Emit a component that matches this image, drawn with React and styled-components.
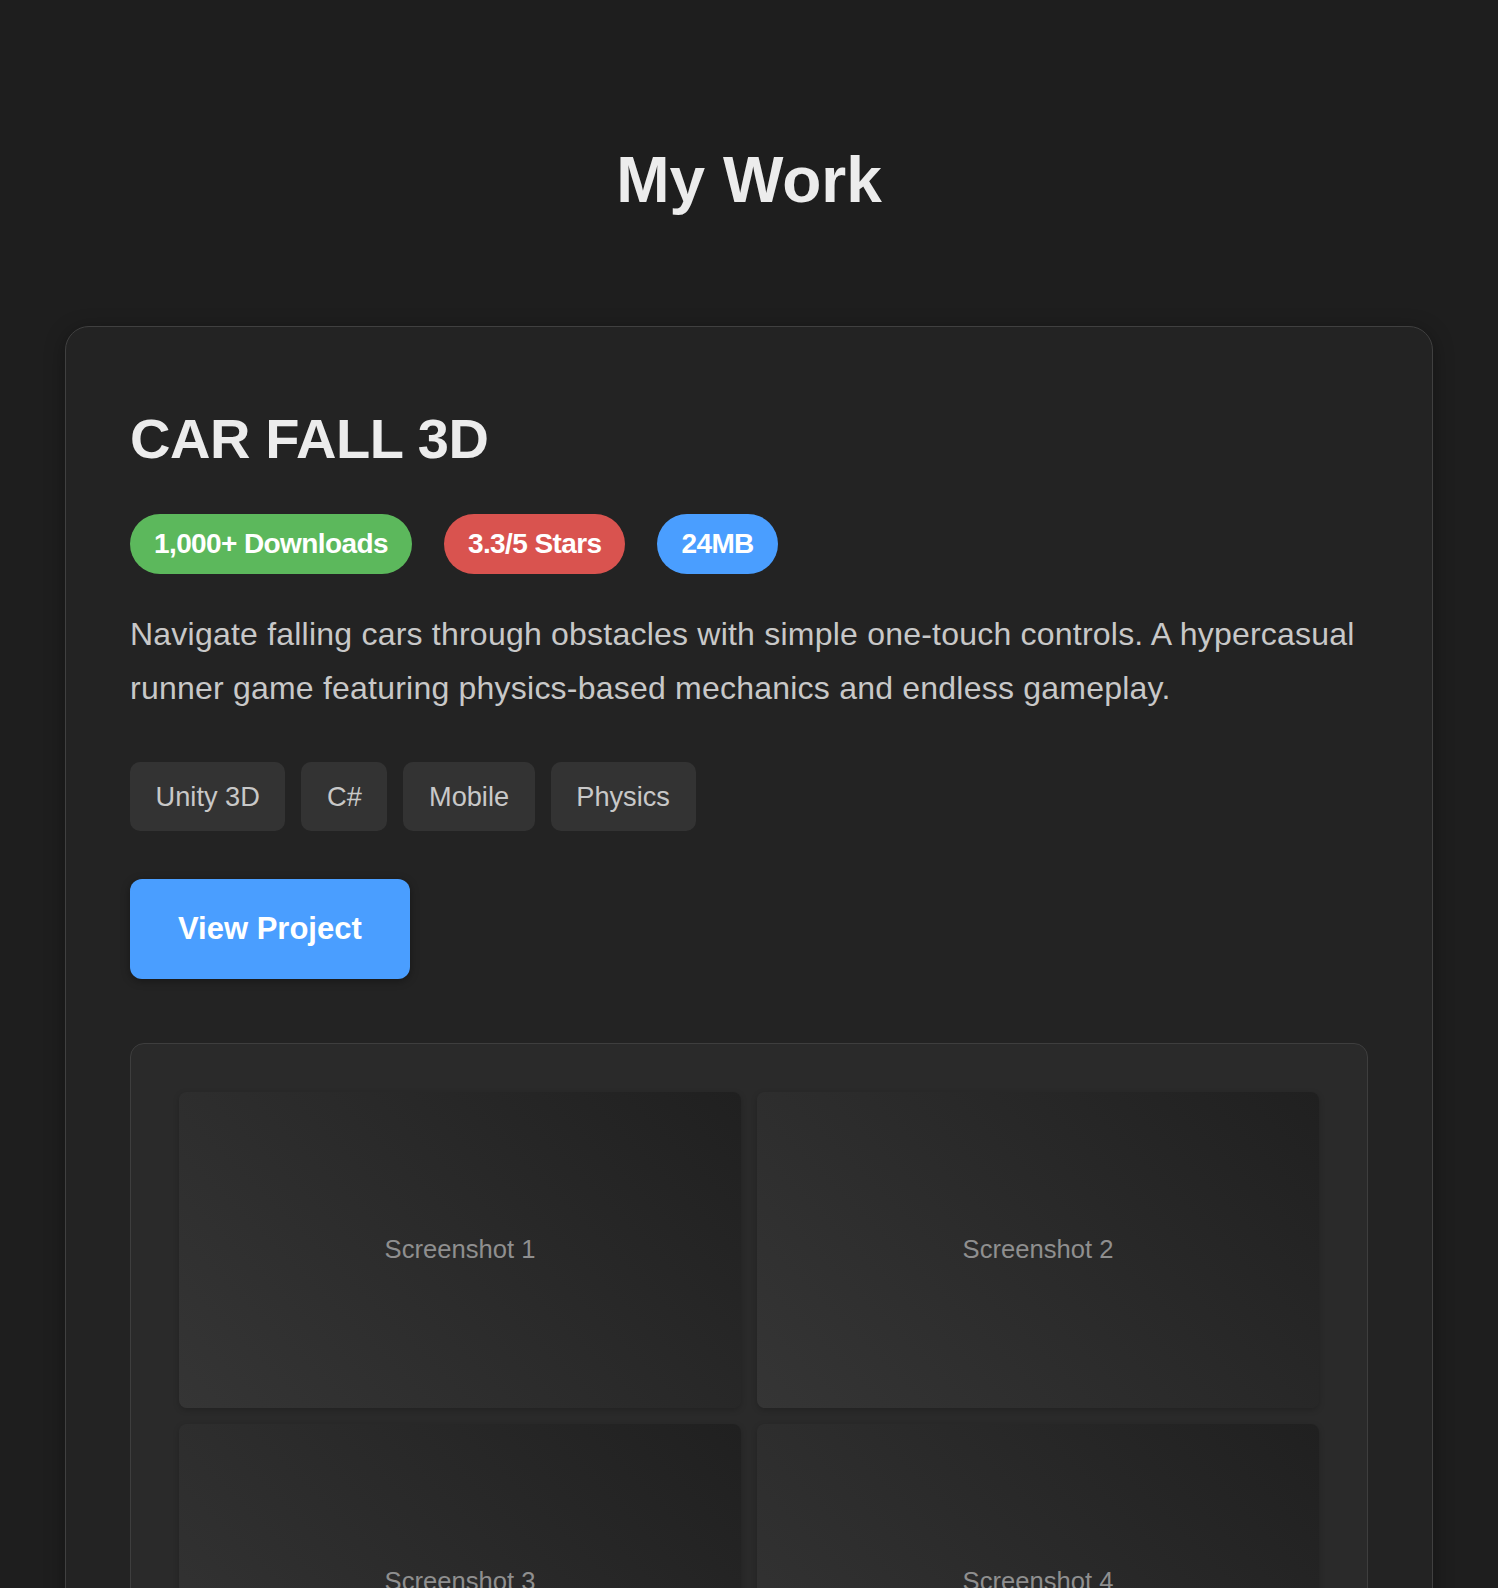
import React from "react";
import styled, { createGlobalStyle } from "styled-components";

const Global = createGlobalStyle`
  html { scrollbar-width: none; }
  html::-webkit-scrollbar { display: none; }
  body {
    margin: 0;
    background: #1e1e1e;
    color: #e8e8e8;
    font-family: "Liberation Sans", Arial, Helvetica, sans-serif;
  }
  * { box-sizing: border-box; }
`;

const Section = styled.section`
  padding: 142px 65px 64px;
`;

const Heading = styled.h2`
  margin: 0 0 107px;
  text-align: center;
  font-size: 64px;
  line-height: 76.8px;
  font-weight: 700;
  color: #ececec;
`;

const Card = styled.article`
  background: #232323;
  border: 1px solid #404040;
  border-radius: 24px;
  padding: 64px;
  box-shadow: 0 4px 20px rgba(0, 0, 0, 0.35);
`;

const Title = styled.h3`
  margin: 0 0 27px;
  font-size: 56px;
  line-height: 96px;
  font-weight: 700;
  letter-spacing: -0.4px;
  color: #ececec;
`;

const BadgeRow = styled.div`
  display: flex;
  gap: 32px;
  margin-bottom: 33px;
`;

const Badge = styled.span`
  display: inline-block;
  padding: 13.5px 24px;
  border-radius: 30px;
  font-size: 28px;
  line-height: 33px;
  font-weight: 700;
  letter-spacing: -0.6px;
  color: #fff;
  background: ${(p) => p.$bg};
`;

const Description = styled.p`
  margin: 0 0 46px;
  font-size: 32px;
  line-height: 54.4px;
  letter-spacing: 0.22px;
  color: #c8c8c8;
`;

const TagRow = styled.div`
  display: flex;
  gap: 16px;
  margin-bottom: 48px;
`;

const Tag = styled.span`
  display: inline-block;
  padding: 19px 25.6px;
  border-radius: 10px;
  background: #333333;
  color: #c8c8c8;
  font-size: 27.2px;
  line-height: 31px;
`;

const Button = styled.a`
  display: inline-block;
  padding: 32px 48px;
  border-radius: 12px;
  background: #4a9eff;
  color: #ffffff;
  font-size: 31px;
  line-height: 36px;
  font-weight: 700;
  text-decoration: none;
  box-shadow: 0 2px 8px rgba(0, 0, 0, 0.35);
`;

const Gallery = styled.div`
  margin-top: 64px;
  background: #2a2a2a;
  border: 1px solid #3e3e3e;
  border-radius: 14px;
  padding: 48px;
  display: grid;
  grid-template-columns: 1fr 1fr;
  gap: 16px;
`;

const Shot = styled.div`
  aspect-ratio: 16 / 9;
  border-radius: 8px;
  background: linear-gradient(45deg, #353535, #202020);
  display: flex;
  align-items: center;
  justify-content: center;
  color: #8f8f8f;
  font-size: 25.6px;
  box-shadow: 0 2px 6px rgba(0, 0, 0, 0.2);
`;

const badges = [
  { label: "1,000+ Downloads", bg: "#5cb85c" },
  { label: "3.3/5 Stars", bg: "#d9534f" },
  { label: "24MB", bg: "#4a9eff" },
];

const tags = ["Unity 3D", "C#", "Mobile", "Physics"];

export default function App() {
  return (
    <>
      <Global />
      <Section>
        <Heading>My Work</Heading>
        <Card>
          <Title>CAR FALL 3D</Title>
          <BadgeRow>
            {badges.map((b) => (
              <Badge key={b.label} $bg={b.bg}>
                {b.label}
              </Badge>
            ))}
          </BadgeRow>
          <Description>
            Navigate falling cars through obstacles with simple one-touch controls. A hypercasual
            runner game featuring physics-based mechanics and endless gameplay.
          </Description>
          <TagRow>
            {tags.map((t) => (
              <Tag key={t}>{t}</Tag>
            ))}
          </TagRow>
          <Button href="#">View Project</Button>
          <Gallery>
            {[1, 2, 3, 4].map((n) => (
              <Shot key={n}>Screenshot {n}</Shot>
            ))}
          </Gallery>
        </Card>
      </Section>
    </>
  );
}
